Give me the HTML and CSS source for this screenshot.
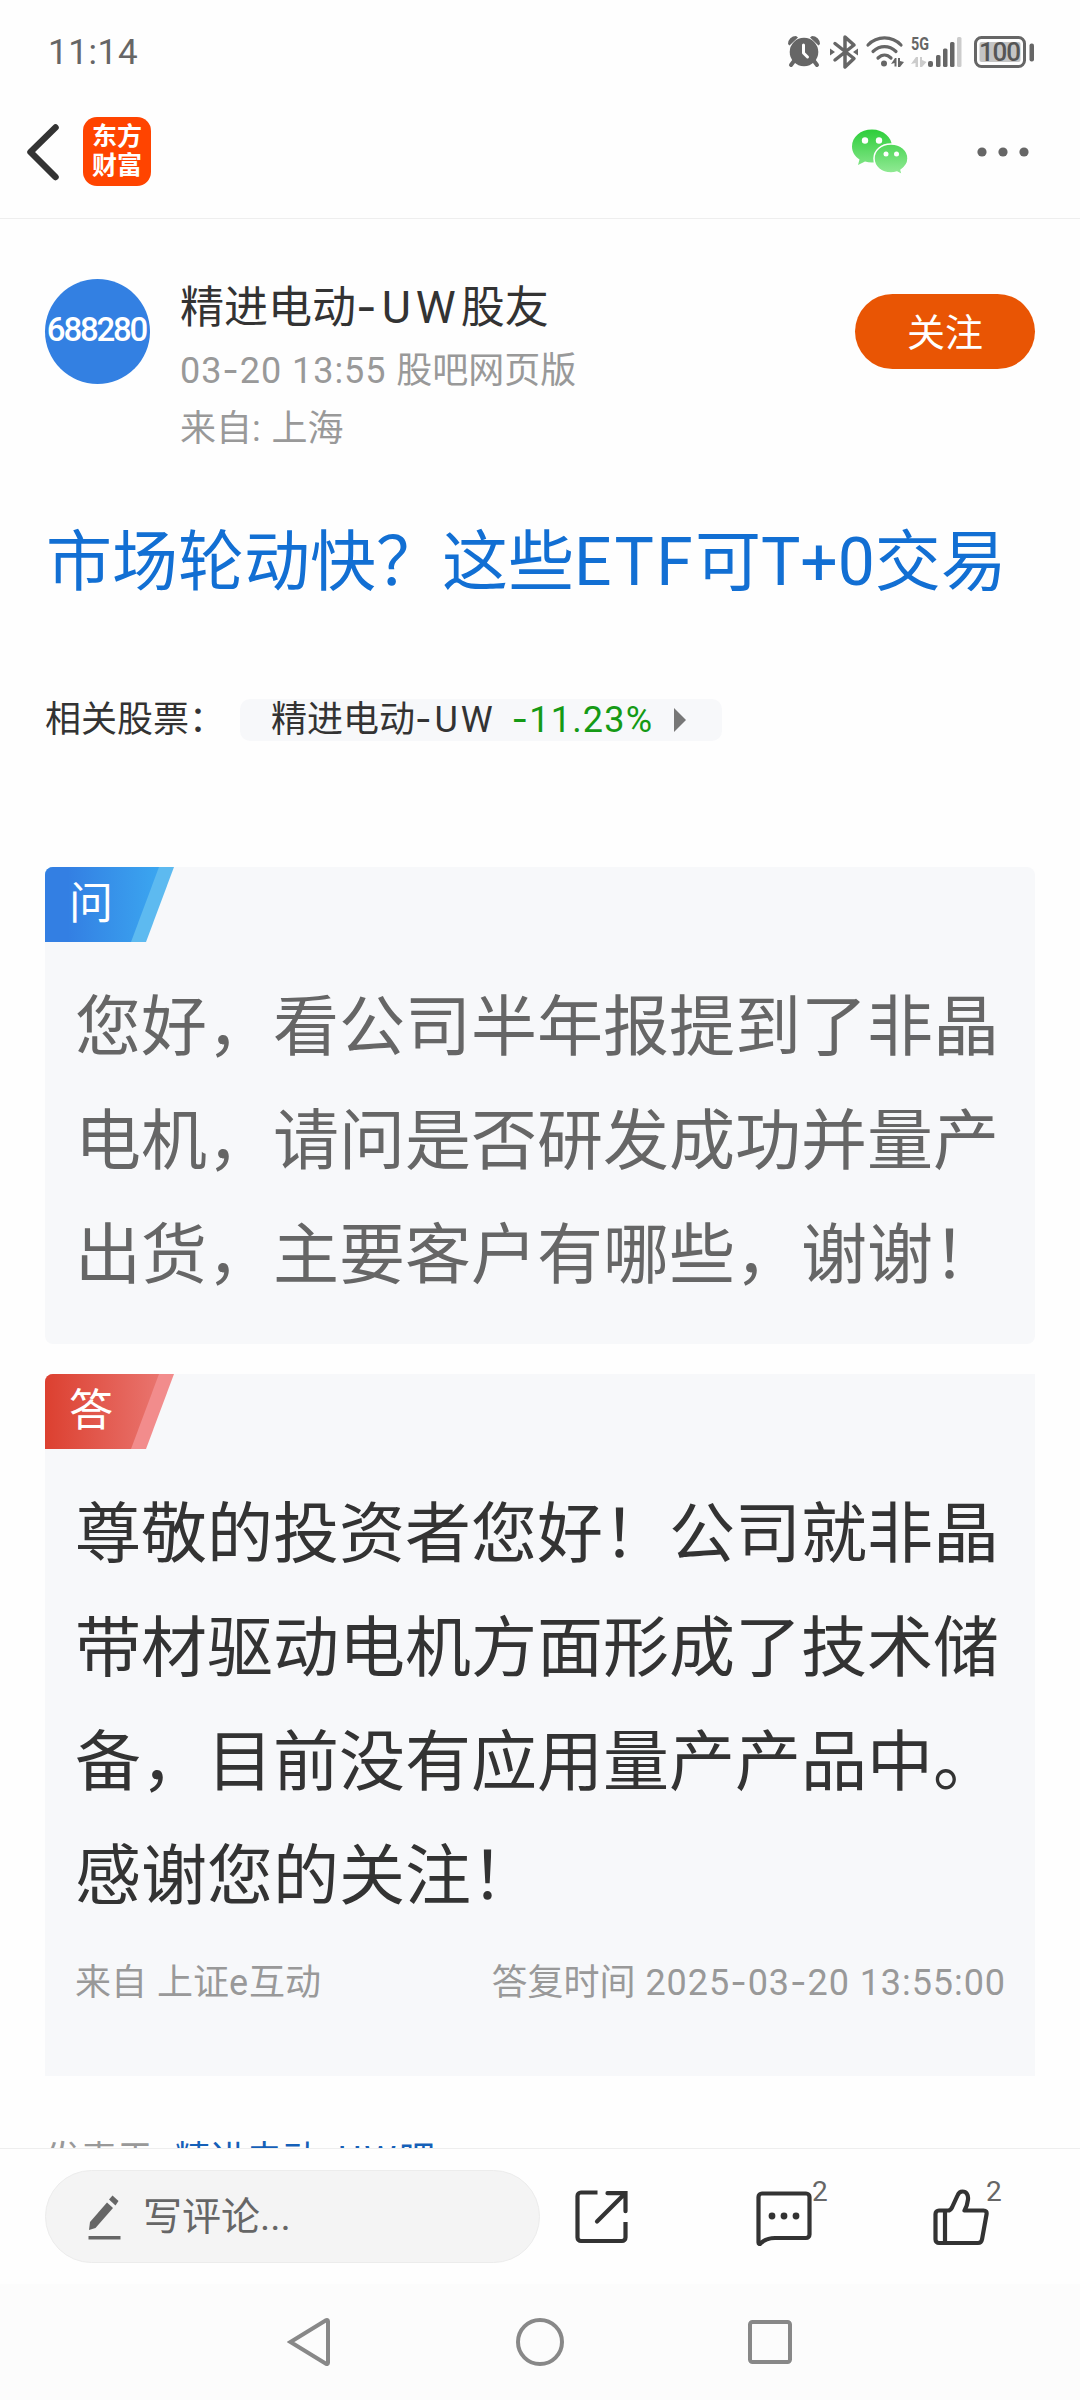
FILE: index.html
```html
<!DOCTYPE html>
<html lang="zh-CN">
<head>
    <meta charset="UTF-8">
    <meta name="viewport" content="width=device-width, initial-scale=1.0">
    <title>精进电动-UW股友</title>
    <link rel="stylesheet" href="styles.css">
</head>
<body>

    <!-- 状态栏 -->
    <div class="status-bar">
        <span class="time">11:14</span>
        <svg class="status-icons" width="250" height="40" viewBox="786 32 250 40">
            <g fill="#666">
                <circle cx="804" cy="52" r="14.3"/>
                <path d="M788 44a8 8 0 0 1 8-8l2 1.500-8.500 8zM820 44a8 8 0 0 0-8-8l-2 1.500 8.500 8z"/>
                <path d="M794 61l-3 4M814 61l3 4" stroke="#666" stroke-width="4" stroke-linecap="round"/>
                <path d="M803.500 45v8l4 4" fill="none" stroke="#fff" stroke-width="3" stroke-linecap="round" stroke-linejoin="round"/>
                <path d="M835 43.500l19 15-9 8.500v-30l9 8-19 15" fill="none" stroke="#666" stroke-width="3.500" stroke-linejoin="round" stroke-linecap="round"/>
                <path d="M830 48.500l5 3.500-5 3.500zM858 48.500l-5 3.500 5 3.500z"/>
                <path d="M868 45c9-9.500 24-9.500 33 0M873 51.500c7-6.500 16-6.500 23 0M878 58c4-4 9-4 13 0" fill="none" stroke="#666" stroke-width="3.200" stroke-linecap="round"/>
                <circle cx="884" cy="63.500" r="3"/>
                <path d="M891 64l4-6h1.500v8.500h-2v-3.500zM898 58l2 0v3l4 1-4 5h-2z"/>
                <rect x="928" y="61" width="5" height="6" rx="2"/>
                <rect x="936" y="55" width="4.500" height="12" rx="1.500"/>
                <rect x="943" y="48.500" width="4.500" height="18.500" rx="1.500"/>
                <rect x="950" y="42" width="4.500" height="25" rx="1.500"/>
                <path d="M911 64l5-7h2v10h-2.500v-4zM920 57h2v3l4.500 2-4.500 5h-2z" fill="#ccc"/>
                <rect x="957" y="37" width="4.500" height="30" rx="1.500" fill="#ccc"/>
                <rect x="975.500" y="37.500" width="49" height="29" rx="6" fill="none" stroke="#666" stroke-width="3"/>
                <rect x="979.500" y="42" width="41" height="20" rx="2" fill="#c4c4c4"/>
                <rect x="1029.500" y="43.500" width="4.500" height="18" rx="2"/>
            </g>
            <text class="net" x="911" y="50" textLength="18" lengthAdjust="spacingAndGlyphs">5G</text>
            <text class="battery" x="979" y="61" textLength="42">100</text>
        </svg>
    </div>

    <!-- 顶部导航 -->
    <div class="top-bar">
        <svg class="back" width="34" height="58" viewBox="0 0 34 58">
            <path d="M29.500 4.500L4.500 29l25 25" fill="none" stroke="#333" stroke-width="6.500" stroke-linecap="round" stroke-linejoin="round"/>
        </svg>
        <div class="app-logo"><span>东方</span><span>财富</span></div>
        <svg class="wechat" width="60" height="48" viewBox="0 0 60 48">
            <defs>
                <linearGradient id="green" x1="0" y1="0" x2="0" y2="48" gradientUnits="userSpaceOnUse">
                    <stop offset="0.05" stop-color="#2fce3c"/>
                    <stop offset="0.95" stop-color="#93ea96"/>
                </linearGradient>
            </defs>
            <path d="M22 1.500C10.500 1.500 2 9 2 18.500c0 5.500 3 10 7.500 13L8 37l7-3.500c2.200.6 4.500 1 7 1 11.500 0 20-7 20-16s-8.500-17-20-17z" fill="url(#green)"/>
            <path d="M41 16c-10 0-17 6.500-17 14.500S31 45 41 45c2 0 4-.3 6-1l5.500 3-1.500-5c4-2.700 7-6.500 7-11.500C58 22.500 51 16 41 16z" fill="url(#green)" stroke="#fff" stroke-width="1.500"/>
            <g fill="#fff"><circle cx="15" cy="12.500" r="3.200"/><circle cx="29" cy="12.500" r="3.200"/><circle cx="36" cy="26" r="2.500"/><circle cx="46.500" cy="26" r="2.500"/></g>
        </svg>
        <svg class="more" width="52" height="10" viewBox="0 0 52 10">
            <g fill="#666"><circle cx="5" cy="5" r="4.600"/><circle cx="26" cy="5" r="4.600"/><circle cx="47" cy="5" r="4.600"/></g>
        </svg>
    </div>

    <!-- 正文 -->
    <div class="article">
        <div class="author">
            <div class="avatar">688280</div>
            <div class="author-info">
                <div class="name">精进电动<span class="en"><span class="dash">-</span>UW</span>股友</div>
                <div class="meta"><span class="num">03<span class="dash">-</span>20 13:55 </span>股吧网页版</div>
                <div class="meta">来自<span class="num">: </span>上海</div>
            </div>
            <button class="follow">关注</button>
        </div>

        <h1 class="title">市场轮动快？这些<span class="etf">ETF</span>可T+0交易</h1>

        <div class="related">
            <span class="related-label">相关股票：</span>
            <div class="stock">
                <span class="stock-name">精进电动<span class="en"><span class="dash">-</span>UW</span></span>
                <span class="stock-change"><span class="dash">-</span>11.23%</span>
                <svg width="12" height="24" viewBox="0 0 12 24"><path d="M0 0l12 12L0 24z" fill="#777"/></svg>
            </div>
        </div>

        <div class="card question">
            <div class="tag">
                <svg class="tag-bg" width="130" height="75" viewBox="0 0 130 75">
                    <defs>
                        <linearGradient id="blue"><stop offset="0.2" stop-color="#337fe3"/><stop offset="1" stop-color="#3ba6f0"/></linearGradient>
                    </defs>
                    <path d="M0 0h129l-28 75H0z" fill="#5dbaf0"/>
                    <path d="M0 0h114L86 75H0z" fill="url(#blue)"/>
                </svg>
                <span class="tag-text">问</span>
            </div>
            <p class="card-text">您好，看公司半年报提到了非晶电机，请问是否研发成功并量产出货，主要客户有哪些，谢谢！</p>
        </div>

        <div class="card answer">
            <div class="tag">
                <svg class="tag-bg" width="130" height="75" viewBox="0 0 130 75">
                    <defs>
                        <linearGradient id="red"><stop offset="0" stop-color="#dc4030"/><stop offset="1" stop-color="#e9746e"/></linearGradient>
                    </defs>
                    <path d="M0 0h129l-28 75H0z" fill="#f28c8c"/>
                    <path d="M0 0h114L86 75H0z" fill="url(#red)"/>
                </svg>
                <span class="tag-text">答</span>
            </div>
            <p class="card-text">尊敬的投资者您好！公司就非晶带材驱动电机方面形成了技术储备，目前没有应用量产产品中。感谢您的关注！</p>
            <div class="card-footer">
                <span>来自<span class="num"> </span>上证<span class="num">e</span>互动</span>
                <span>答复时间<span class="num"> 2025<span class="dash">-</span>03<span class="dash">-</span>20 13:55:00</span></span>
            </div>
        </div>

        <div class="posted">发表于<span class="num">: </span><a>精进电动<span class="en"><span class="dash">-</span>UW</span>吧</a></div>
    </div>

    <!-- 评论栏 -->
    <div class="comment-bar">
        <div class="comment-input">
            <svg width="34" height="46" viewBox="0 0 34 46">
                <g fill="#666">
                    <path d="M19 8.500l6 5.500L7.500 34 1 36l1-8z"/>
                    <path d="M21 5.500l3.500-4 6 5.500-3 4.500z"/>
                    <rect x="0.500" y="42" width="32" height="3.500"/>
                </g>
            </svg>
            <span class="placeholder">写评论...</span>
        </div>
        <div class="action share">
            <svg width="54" height="54" viewBox="0 0 54 54">
                <g fill="none" stroke="#333" stroke-width="4.200">
                    <path d="M22.500 2.500H6a3.500 3.500 0 0 0-3.500 3.500v41.500A3.500 3.500 0 0 0 6 51h41a3.500 3.500 0 0 0 3.500-3.500V32"/>
                    <path d="M32.500 3.200h18v18M50 3.500L22 31.500" stroke-linecap="round"/>
                </g>
            </svg>
        </div>
        <div class="action reply">
            <svg width="56" height="56" viewBox="0 0 56 56">
                <path d="M2.500 51.500V6A3.500 3.500 0 0 1 6 2.500h44A3.500 3.500 0 0 1 53.500 6v37.500A3.500 3.500 0 0 1 50 47H19C12 47 8 49 4.500 52.500c-1 .8-2 .3-2-1z" fill="none" stroke="#333" stroke-width="4.200"/>
                <g fill="#333"><circle cx="16" cy="25" r="3.400"/><circle cx="28" cy="25" r="3.400"/><circle cx="40" cy="25" r="3.400"/></g>
            </svg>
            <span class="count">2</span>
        </div>
        <div class="action like">
            <svg width="56" height="58" viewBox="0 0 56 58">
                <g fill="none" stroke="#333" stroke-width="4.200" stroke-linejoin="round">
                    <path d="M6 22.500h9c2 0 3-1 4-3l5.500-12c1-2.500 2.500-4 5-4 4 0 6 3.500 5.500 8-.4 4-1.800 8-3.500 11h19c2.500 0 3.500 1.500 3 4l-4.500 25c-.5 2.500-1.500 3.500-4 3.500H6A3.500 3.500 0 0 1 2.500 51.500V26A3.500 3.500 0 0 1 6 22.500z"/>
                    <path d="M12 23v31.500"/>
                </g>
            </svg>
            <span class="count">2</span>
        </div>
    </div>

    <!-- 系统导航键 -->
    <div class="nav-bar">
        <svg width="44" height="50" viewBox="0 0 44 50"><path d="M39 3.200L3.500 25 39 46.800c1 .6 2 .2 2-1V4.200c0-1.200-1-1.600-2-1z" fill="none" stroke="#888" stroke-width="4"/></svg>
        <svg width="48" height="48" viewBox="0 0 48 48"><circle cx="24" cy="24" r="22" fill="none" stroke="#888" stroke-width="4"/></svg>
        <svg width="44" height="44" viewBox="0 0 44 44"><rect x="2" y="2" width="40" height="40" rx="2.500" fill="none" stroke="#888" stroke-width="4"/></svg>
    </div>

</body>
</html>
```
FILE: styles.css
```css
* {
    box-sizing: border-box;
}

body {
    margin: 0;
    width: 1080px;
    height: 2400px;
    display: flex;
    flex-direction: column;
    background-color: #fefefe;
    color: #333;
    font-family: Roboto, "Noto Sans CJK SC", sans-serif;
    overflow: hidden;
}

svg {
    display: block;
    flex: none;
}

/* 英文和数字的字距 */
.en {
    letter-spacing: 0.08em;
}

.num {
    letter-spacing: 0.026em;
}

.dash {
    font-family: Inter, sans-serif;
    line-height: 1;
}

.status-bar {
    height: 104px;
    padding: 0 44px 0 48px;
    display: flex;
    align-items: center;
    justify-content: space-between;
}

.time {
    color: #666;
    font-size: 35px;
    letter-spacing: 0.6px;
}

.net {
    font-size: 19px;
    font-weight: bold;
    fill: #666;
}

.battery {
    font-size: 26px;
    font-weight: 500;
    fill: #555;
}

.top-bar {
    height: 115px;
    padding: 0 51px 19px 26px;
    display: flex;
    align-items: center;
    border-bottom: 1px solid #eee;
}

.app-logo {
    width: 68px;
    height: 69px;
    margin-left: 23px;
    border-radius: 14px;
    background-color: #ff4400;
    color: #fff;
    display: flex;
    flex-direction: column;
    align-items: center;
    justify-content: center;
    font-size: 25px;
    font-weight: 700;
    line-height: 29px;
    padding-bottom: 1px;
}

.wechat {
    margin-left: auto;
}

.more {
    margin-left: 67px;
}

.article {
    height: 1929px;
    padding: 60px 45px 0;
    overflow: hidden;
}

.author {
    display: flex;
    align-items: flex-start;
}

.avatar {
    width: 105px;
    height: 105px;
    border-radius: 50%;
    background-color: #3380e2;
    color: #fff;
    display: flex;
    align-items: center;
    justify-content: center;
    font-size: 33px;
    font-weight: 500;
    letter-spacing: -2.200px;
    text-indent: -2px;
    padding-bottom: 4px;
}

.author-info {
    flex: 1;
    margin-left: 30px;
}

.name {
    height: 60px;
    margin-bottom: 3px;
    font-size: 44px;
    line-height: 58px;
}

.name .en {
    font-size: 45px;
    letter-spacing: 0.11em;
}

.meta {
    height: 58px;
    color: #999;
    font-size: 36px;
    line-height: 58px;
}

.follow {
    width: 180px;
    height: 75px;
    margin-top: 15px;
    padding: 0 0 4px;
    border: none;
    border-radius: 38px;
    background-color: #e95504;
    color: #fff;
    font-family: inherit;
    font-size: 38px;
    cursor: pointer;
}

.title {
    margin: 55px 0 0 1px;
    color: #126fd3;
    font-size: 66px;
    font-weight: normal;
    line-height: 100px;
    white-space: nowrap;
}

.etf {
    letter-spacing: 2.300px;
}

.related {
    display: flex;
    align-items: center;
    height: 42px;
    margin-top: 86px;
    font-size: 36px;
    line-height: 42px;
}

.related-label {
    width: 195px;
}

.stock {
    width: 482px;
    height: 42px;
    padding-left: 31px;
    display: flex;
    align-items: center;
    border-radius: 10px;
    background-color: #f7f8fa;
}

.stock-change {
    margin: 0 21px 0 16px;
    color: #159a15;
    letter-spacing: 1.200px;
}

.card {
    background-color: #f7f8fa;
    border-radius: 8px;
    overflow: hidden;
}

.question {
    height: 477px;
    margin-top: 126px;
}

.answer {
    height: 702px;
    margin-top: 30px;
    border-radius: 8px 0 0 0;
}

.tag {
    position: relative;
    width: 130px;
    height: 75px;
}

.tag-bg {
    position: absolute;
    left: 0;
    top: 0;
}

.tag-text {
    position: relative;
    display: block;
    padding-left: 24px;
    color: #fff;
    font-size: 44px;
    line-height: 75px;
}

.card-text {
    margin: 29px 30px 0;
    font-size: 66px;
    line-height: 114px;
}

.question .card-text {
    color: #666;
}

.card-footer {
    display: flex;
    justify-content: space-between;
    margin: 24px 29px 0 30px;
    color: #999;
    font-size: 36px;
    line-height: 50px;
}

.posted {
    margin-top: 59px;
    color: #999;
    font-size: 36px;
    line-height: 50px;
}

.posted a {
    margin-left: 2px;
    color: #1560b8;
}

.comment-bar {
    height: 136px;
    padding: 0 0 0 45px;
    display: flex;
    align-items: center;
    border-top: 1px solid #eee;
}

.comment-input {
    width: 495px;
    height: 93px;
    padding-left: 42px;
    display: flex;
    align-items: center;
    gap: 21px;
    border: 1px solid #ececec;
    border-radius: 47px;
    background-color: #f4f4f4;
    color: #666;
    font-size: 39px;
}

.placeholder {
    padding-bottom: 7px;
}

.action {
    position: relative;
}

.share {
    margin-left: 35px;
}

.reply {
    margin: 5px 0 0 127px;
}

.like {
    margin-left: 121px;
}

.count {
    position: absolute;
    left: 56px;
    top: -14px;
    color: #666;
    font-size: 28px;
    line-height: 30px;
}

.like .count {
    left: 53px;
    top: -11px;
}

.nav-bar {
    flex: 1;
    padding: 0 288px 0 287px;
    display: flex;
    align-items: center;
    justify-content: space-between;
    background-color: #fcfcfc;
}
```
